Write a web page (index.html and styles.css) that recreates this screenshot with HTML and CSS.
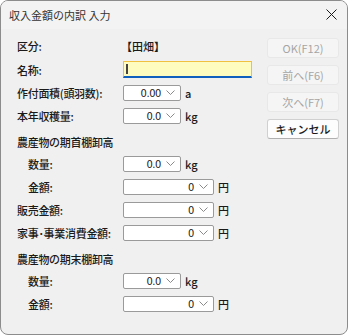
FILE: index.html
```html
<!DOCTYPE html>
<html lang="ja">
<head>
    <meta charset="UTF-8">
    <meta name="viewport" content="width=device-width, initial-scale=1.0">
    <title>収入金額の内訳 入力</title>
    <link rel="stylesheet" href="styles.css">
</head>
<body>
   <div class="window">
      <div class="titlebar">
         <span class="title">収入金額の内訳 入力</span>
         <svg class="close" width="11" height="11" viewBox="0 0 11 11">
            <path d="M0.5 0.5 L10.5 10.5 M10.5 0.5 L0.5 10.5" stroke="#1a1a1a" stroke-width="1" fill="none"/>
         </svg>
      </div>
      <div class="content">
         <div class="form">
            <div class="row">
               <label class="lbl">区分:</label>
               <span class="value">【田畑】</span>
            </div>
            <div class="row row-name">
               <label class="lbl">名称:</label>
               <div class="name-input"><span class="caret"></span></div>
            </div>
            <div class="row">
               <label class="lbl">作付面積(頭羽数):</label>
               <div class="combo small"><span class="num">0.00</span><svg class="chev" width="9" height="6" viewBox="0 0 9 6"><path d="M0.5 0.5 L4.5 4.5 L8.5 0.5" stroke="#8a8a8a" fill="none"/></svg></div>
               <span class="unit">a</span>
            </div>
            <div class="row">
               <label class="lbl">本年収穫量:</label>
               <div class="combo small"><span class="num">0.0</span><svg class="chev" width="9" height="6" viewBox="0 0 9 6"><path d="M0.5 0.5 L4.5 4.5 L8.5 0.5" stroke="#8a8a8a" fill="none"/></svg></div>
               <span class="unit">kg</span>
            </div>

            <div class="heading">農産物の期首棚卸高</div>
            <div class="row">
               <label class="lbl sub">数量:</label>
               <div class="combo small"><span class="num">0.0</span><svg class="chev" width="9" height="6" viewBox="0 0 9 6"><path d="M0.5 0.5 L4.5 4.5 L8.5 0.5" stroke="#8a8a8a" fill="none"/></svg></div>
               <span class="unit">kg</span>
            </div>
            <div class="row">
               <label class="lbl sub">金額:</label>
               <div class="combo large"><span class="num">0</span><svg class="chev" width="9" height="6" viewBox="0 0 9 6"><path d="M0.5 0.5 L4.5 4.5 L8.5 0.5" stroke="#8a8a8a" fill="none"/></svg></div>
               <span class="unit">円</span>
            </div>
            <div class="row">
               <label class="lbl">販売金額:</label>
               <div class="combo large"><span class="num">0</span><svg class="chev" width="9" height="6" viewBox="0 0 9 6"><path d="M0.5 0.5 L4.5 4.5 L8.5 0.5" stroke="#8a8a8a" fill="none"/></svg></div>
               <span class="unit">円</span>
            </div>
            <div class="row">
               <label class="lbl">家事･事業消費金額:</label>
               <div class="combo large"><span class="num">0</span><svg class="chev" width="9" height="6" viewBox="0 0 9 6"><path d="M0.5 0.5 L4.5 4.5 L8.5 0.5" stroke="#8a8a8a" fill="none"/></svg></div>
               <span class="unit">円</span>
            </div>

            <div class="heading">農産物の期末棚卸高</div>
            <div class="row">
               <label class="lbl sub">数量:</label>
               <div class="combo small"><span class="num">0.0</span><svg class="chev" width="9" height="6" viewBox="0 0 9 6"><path d="M0.5 0.5 L4.5 4.5 L8.5 0.5" stroke="#8a8a8a" fill="none"/></svg></div>
               <span class="unit">kg</span>
            </div>
            <div class="row">
               <label class="lbl sub">金額:</label>
               <div class="combo large"><span class="num">0</span><svg class="chev" width="9" height="6" viewBox="0 0 9 6"><path d="M0.5 0.5 L4.5 4.5 L8.5 0.5" stroke="#8a8a8a" fill="none"/></svg></div>
               <span class="unit">円</span>
            </div>
         </div>

         <div class="buttons">
            <button type="button" class="btn" disabled>OK(F12)</button>
            <button type="button" class="btn" disabled>前へ(F6)</button>
            <button type="button" class="btn" disabled>次へ(F7)</button>
            <button type="button" class="btn btn-cancel">キャンセル</button>
         </div>
      </div>
   </div>
</body>
</html>
```

FILE: styles.css
```css
body {
    margin: 0;
    padding: 0;
    background-color: #ffffff;
    font-family: "Noto Sans CJK JP", "Noto Sans", sans-serif;
    font-size: 11px;
    color: #1a1a1a;
}

.window {
    width: 346px;
    height: 333px;
    border: 1px solid #8c8c8c;
    border-radius: 8px;
    background-color: #f0f0f0;
    overflow: hidden;
}

.titlebar {
    height: 28px;
    display: flex;
    align-items: center;
    justify-content: space-between;
    padding: 0 10px 0 8px;
    background-color: #f3f3f3;
}

.title {
    font-size: 11px;
    color: #333;
}

.close {
    display: block;
    margin-top: -2px;
}

.content {
    display: flex;
    padding-top: 9px;
}

.form {
    width: 250px;
    padding-left: 16px;
    display: flex;
    flex-direction: column;
    gap: 7px;
}

.row {
    display: flex;
    align-items: center;
    height: 16px;
}

.row-name {
    height: 17px;
}

.lbl {
    width: 106px;
    flex-shrink: 0;
    font-weight: 500;
    letter-spacing: -0.3px;
}

.lbl.sub {
    padding-left: 11px;
    width: 95px;
}

.value {
    font-weight: 500;
    margin-left: -2px;
}

.heading {
    margin-top: 4px;
    height: 14px;
    line-height: 14px;
    font-weight: 500;
    letter-spacing: -0.3px;
}

.name-input {
    width: 125px;
    height: 14px;
    background-color: #fffcc0;
    border: 1px solid #f0c040;
    border-bottom: 2px solid #1060c0;
    display: flex;
    align-items: center;
    padding-left: 2px;
}

.caret {
    width: 2px;
    height: 10px;
    background-color: #444;
}

.combo {
    height: 14px;
    background-color: #ffffff;
    border: 1px solid #9a9a9a;
    border-radius: 2px;
    display: flex;
    align-items: center;
    justify-content: flex-end;
    padding-right: 5px;
    box-sizing: content-box;
}

.combo.small {
    width: 51px;
}

.combo.large {
    width: 84px;
}

.num {
    font-family: "DejaVu Sans Condensed", "Liberation Sans", sans-serif;
    font-stretch: condensed;
    font-size: 11px;
    letter-spacing: -0.4px;
    margin-right: 5px;
}

.chev {
    display: block;
}

.unit {
    margin-left: 4px;
    font-weight: 500;
}

.buttons {
    display: flex;
    flex-direction: column;
    gap: 7px;
}

.btn {
    width: 72px;
    height: 20px;
    font-family: "Noto Sans CJK JP", "Noto Sans", sans-serif;
    font-size: 11px;
    border: 1px solid #e8e8e8;
    border-radius: 3px;
    background-color: #f5f5f5;
    color: #a5a5a5;
    padding: 0;
}

.btn-cancel {
    background-color: #fdfdfd;
    color: #1a1a1a;
    border: 1px solid #d0d0d0;
    border-bottom-color: #b0b0b0;
    font-weight: 500;
}
```
